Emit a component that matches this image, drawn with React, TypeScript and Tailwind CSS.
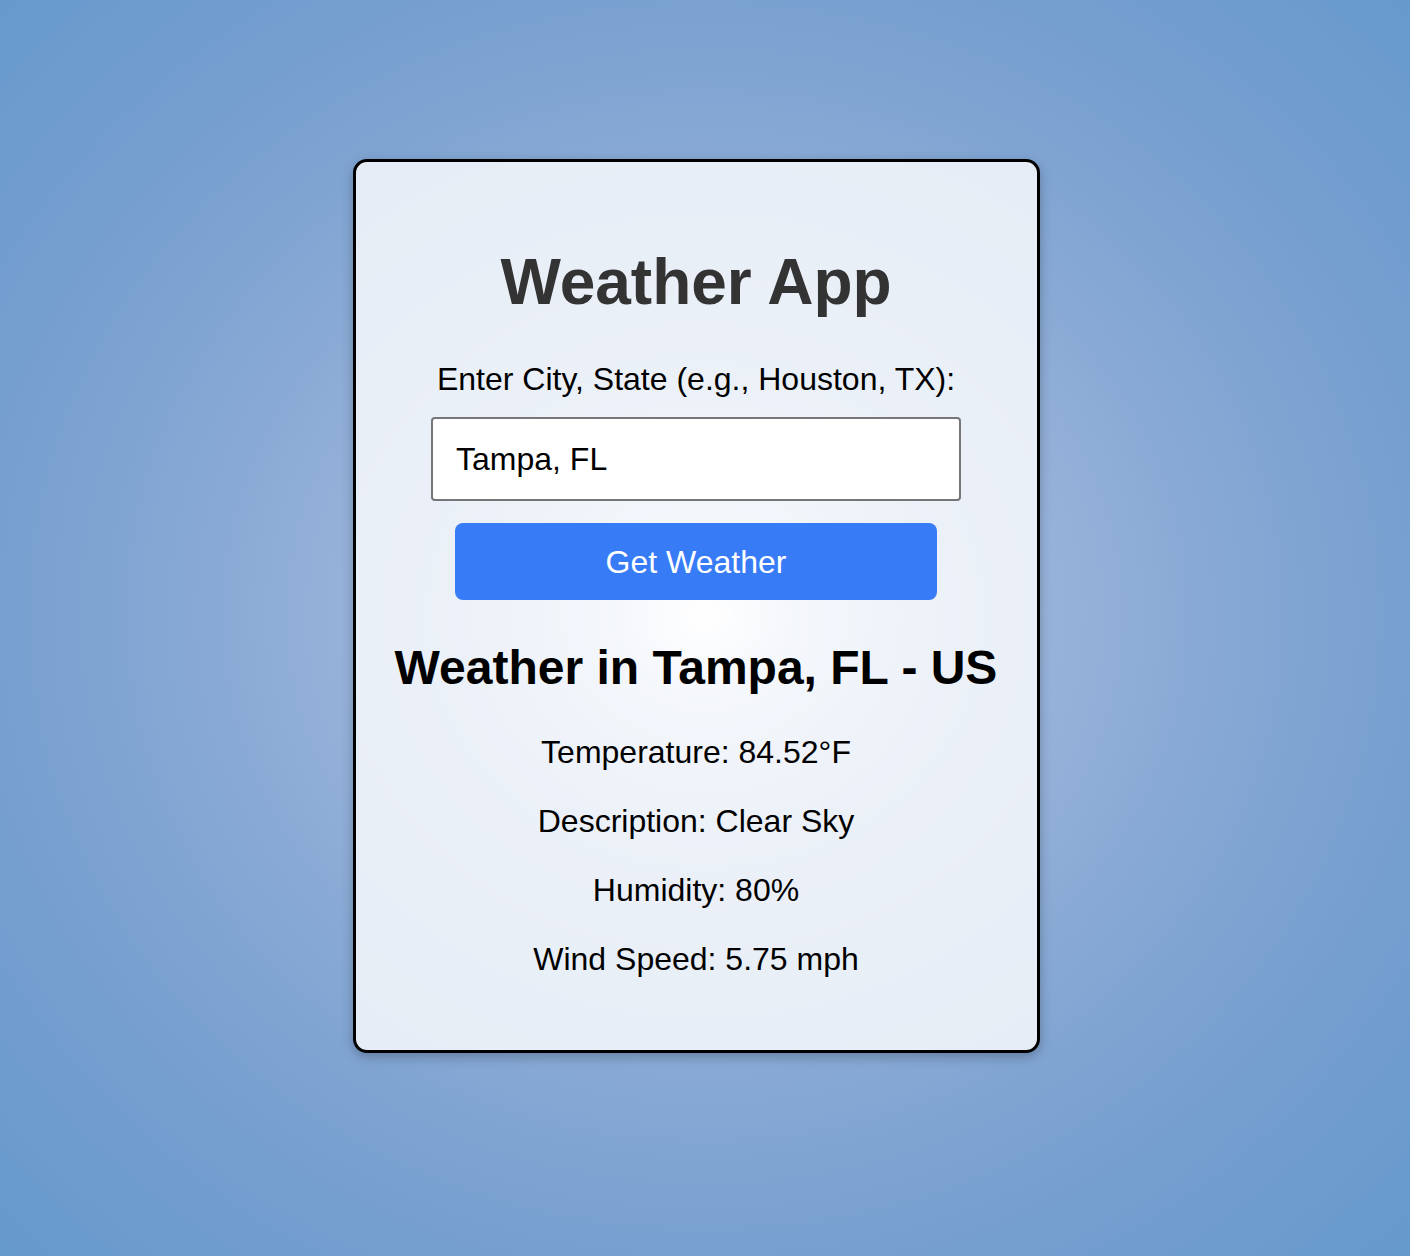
import React from "react";

export default function App() {
  return (
    <div
      className="min-h-screen w-full flex justify-center pr-[18px] pt-[159px] bg-[radial-gradient(ellipse_at_50%_49%,#ffffff_0%,#c9d6ec_9%,#9fb8de_26%,#8aaad5_48%,#78a0d0_70%,#6699cc_100%)]"
      style={{ fontFamily: '"Liberation Sans", Arial, sans-serif' }}
    >
      <div className="w-[687px] h-[894px] rounded-[14px] border-[3px] border-black bg-white/80 shadow-[0_4px_12px_rgba(0,0,0,0.25)] flex flex-col items-center text-center pt-[84px]">
        <h1 className="text-[64px] leading-[1.15] font-bold text-[#333333]">Weather App</h1>
        <label className="mt-[41px] text-[32px] leading-[1.15] text-black">
          Enter City, State (e.g., Houston, TX):
        </label>
        <div className="mt-[20px] w-[530px] h-[84px] border-2 border-[#767676] rounded-[4px] bg-white flex items-center pl-[23px] text-[32px] text-black text-left">
          Tampa, FL
        </div>
        <button className="mt-[22px] w-[482px] h-[77px] rounded-[8px] bg-[#377bf6] text-white text-[32px] flex items-center justify-center">
          Get Weather
        </button>
        <h2 className="mt-[40px] text-[48px] leading-[1.15] font-bold text-black">
          Weather in Tampa, FL - US
        </h2>
        <div className="mt-[38px] flex flex-col gap-[32px] text-[32px] leading-[37px] text-black">
          <p>Temperature: 84.52°F</p>
          <p>Description: Clear Sky</p>
          <p>Humidity: 80%</p>
          <p>Wind Speed: 5.75 mph</p>
        </div>
      </div>
    </div>
  );
}
